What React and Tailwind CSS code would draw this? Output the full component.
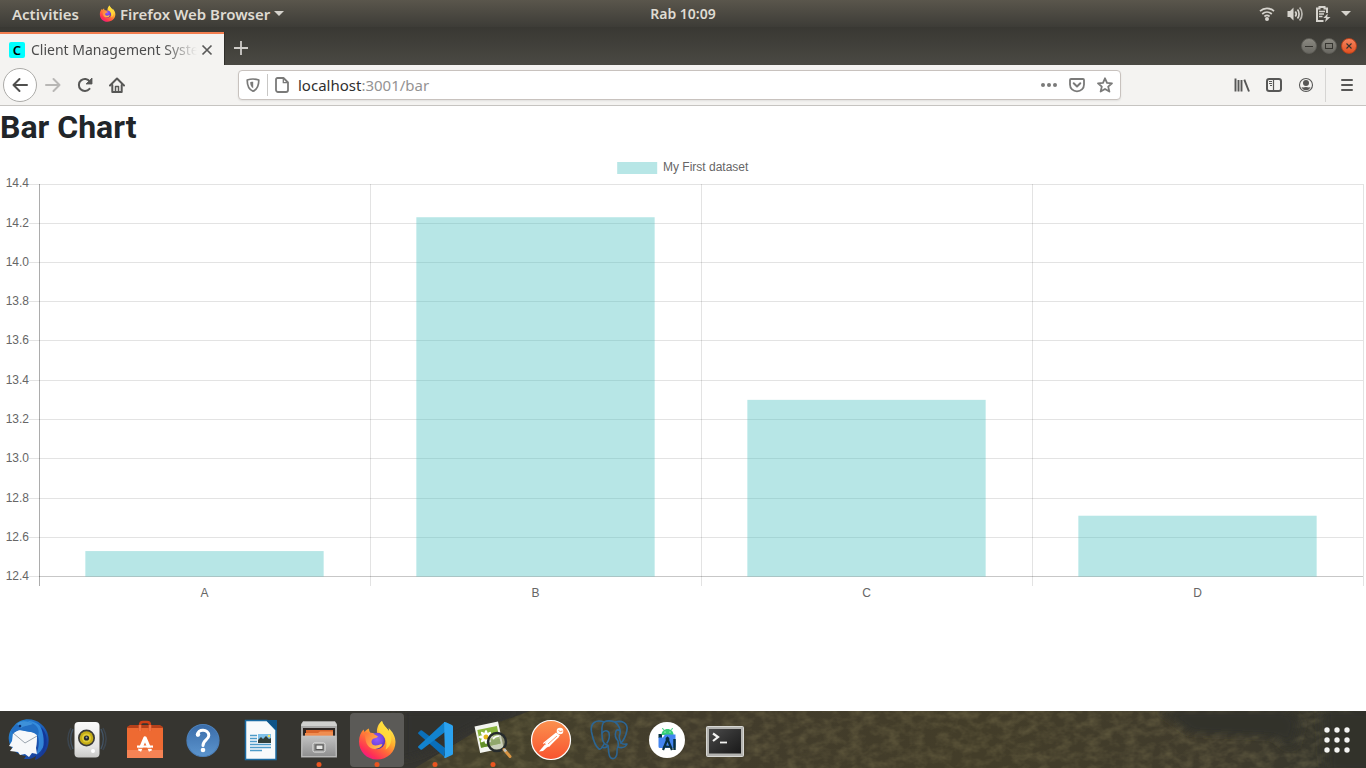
import React from "react";

const UI_FONT = "font-['Noto_Sans','Open_Sans',sans-serif]";

/* ---------- small icons ---------- */

function FirefoxMark({ className, id }) {
  return (
    <svg viewBox="0 0 38 40" className={className} aria-hidden="true">
      <defs>
        <linearGradient id={`${id}-body`} x1="0.85" y1="0.1" x2="0.25" y2="1">
          <stop offset="0" stopColor="#fff44f" />
          <stop offset="0.35" stopColor="#ffb02e" />
          <stop offset="0.6" stopColor="#ff6a3a" />
          <stop offset="0.85" stopColor="#ff2f56" />
          <stop offset="1" stopColor="#f0158f" />
        </linearGradient>
        <radialGradient id={`${id}-globe`} cx="0.5" cy="0.4" r="0.6">
          <stop offset="0" stopColor="#9059ff" />
          <stop offset="0.6" stopColor="#7547e0" />
          <stop offset="1" stopColor="#4a2aa5" />
        </radialGradient>
        <linearGradient id={`${id}-head`} x1="0" y1="0" x2="1" y2="0.6">
          <stop offset="0" stopColor="#ff7139" />
          <stop offset="1" stopColor="#ffbd4f" />
        </linearGradient>
      </defs>
      <path
        d="M24 1C25 5 29 8 31 11C31 10 31 9 30.500 8C35 12 37.500 17 37.500 22C37.500 32 29.500 39.500 19 39.500C8.500 39.500 1 31.500 1 21.500C1 16.500 3 12 5.500 9.500L6.500 12C8 10 9.500 9 11 8.500C11 10 11.500 12 12.500 13H19C18.500 8 20.500 3.500 24 1Z"
        fill={`url(#${id}-body)`}
      />
      <circle cx="19" cy="21" r="8.2" fill={`url(#${id}-globe)`} />
      <path
        d="M6 12C9 13 13 12 15 13.500L20 16.500C18 19 15.500 17.500 14 20C12.500 22.500 14.500 25.500 17.500 25.500C21 25.500 22 23.500 24.500 24.500C22 30 13 30.500 9.500 25C6.500 20.500 8 15.500 6 12Z"
        fill={`url(#${id}-head)`}
      />
      <path
        d="M24 1C25 6 31 9 33 16C34.500 22 31 28 27.500 29.500C30 24 28 16.500 22 13C19 10 21 4 24 1Z"
        fill="#ffdd3c"
        opacity="0.85"
      />
    </svg>
  );
}

function CaretDown() {
  return (
    <svg viewBox="0 0 10 5" className="h-[5px] w-[10px]" aria-hidden="true">
      <path d="M0 0H10L5 5Z" fill="#d6d3cd" />
    </svg>
  );
}

function WifiIcon() {
  return (
    <svg viewBox="0 0 16 16" className="size-4" fill="none" stroke="#d6d3cd" strokeWidth="1.700" aria-hidden="true">
      <path d="M1 5.200C5 1.300 11 1.300 15 5.200" />
      <path d="M3.200 8C6 5.500 10 5.500 12.800 8" />
      <path d="M5.400 10.500C7 9.200 9 9.200 10.600 10.500" />
      <circle cx="8" cy="13" r="2" fill="#d6d3cd" stroke="none" />
    </svg>
  );
}

function VolumeIcon() {
  return (
    <svg viewBox="0 0 16 16" className="size-4" fill="none" stroke="#d6d3cd" strokeWidth="1.700" aria-hidden="true">
      <path d="M0.500 5H3L6.500 1.500V14.500L3 11H0.500Z" fill="#d6d3cd" stroke="none" />
      <path d="M8.300 5.500C9.500 7 9.500 9 8.300 10.500" />
      <path d="M10.500 3.500C12.600 6 12.600 10 10.500 12.500" />
      <path d="M12.600 1.500C15.800 5 15.800 11 12.600 14.500" opacity="0.800" />
    </svg>
  );
}

function BatteryIcon() {
  return (
    <svg viewBox="0 0 16 16" className="size-4" fill="none" stroke="#d6d3cd" aria-hidden="true">
      <path d="M8.500 15H2V2.500H4.500V1H9.500V2.500H12V7" strokeWidth="2" />
      <path d="M4 5.500H10M4 8H9M4 10.500H7.500" strokeWidth="1.400" />
      <path d="M12.700 7.500L8.300 12H11L10 16L15.500 11H12.300Z" fill="#d6d3cd" stroke="none" />
    </svg>
  );
}

function BackIcon() {
  return (
    <svg viewBox="0 0 16 16" className="size-4" fill="none" stroke="#4f4f4e" strokeWidth="2" strokeLinecap="round" strokeLinejoin="round" aria-hidden="true">
      <path d="M15 8H1.500M7.500 2L1.500 8L7.500 14" />
    </svg>
  );
}

function ForwardIcon() {
  return (
    <svg viewBox="0 0 16 16" className="size-4" fill="none" stroke="#b8b7b5" strokeWidth="2" strokeLinecap="round" strokeLinejoin="round" aria-hidden="true">
      <path d="M1 8H14.500M8.500 2L14.500 8L8.500 14" />
    </svg>
  );
}

function ReloadIcon() {
  return (
    <svg viewBox="0 0 16 16" className="size-4" fill="none" stroke="#575756" strokeWidth="2" aria-hidden="true">
      <path d="M12.500 11.800A6 6 0 1 1 12.800 4.500" strokeLinecap="round" />
      <path d="M15 1V7H9Z" fill="#575756" stroke="#575756" strokeWidth="0.800" strokeLinejoin="round" />
    </svg>
  );
}

function HomeIcon() {
  return (
    <svg viewBox="0 0 16 16" className="size-4" fill="none" stroke="#575756" strokeWidth="2" strokeLinecap="round" strokeLinejoin="round" aria-hidden="true">
      <path d="M1 8.500L8 1.500L15 8.500" />
      <path d="M3.300 8V15H12.700V8" />
      <path d="M6.500 14.500V9.500H9.500V14.500" strokeWidth="1.500" />
    </svg>
  );
}

function ShieldIcon() {
  return (
    <svg viewBox="0 0 14 14" className="size-[14px]" fill="none" stroke="#7a7a79" aria-hidden="true">
      <path d="M7 1C9 1 11 1.400 12.800 2C12.800 8 11.500 11.500 7 13.200C2.500 11.500 1.200 8 1.200 2C3 1.400 5 1 7 1Z" strokeWidth="1.700" strokeLinejoin="round" />
      <path d="M7.200 3.800V10.200C5 9 4.300 7 4.200 4.200C5.200 3.900 6 3.800 7.200 3.800Z" fill="#7a7a79" stroke="none" />
    </svg>
  );
}

function PageIcon() {
  return (
    <svg viewBox="0 0 16 16" className="size-4" fill="none" stroke="#7a7a79" strokeWidth="1.800" strokeLinejoin="round" aria-hidden="true">
      <path d="M3.500 1H9.500L14 5.500V13A2 2 0 0 1 12 15H4A2 2 0 0 1 2 13V2.500A1.500 1.500 0 0 1 3.500 1Z" />
      <path d="M9.300 1.200V5.700H13.800" strokeWidth="1.300" />
    </svg>
  );
}

function DotsIcon() {
  return (
    <svg viewBox="0 0 16 16" className="size-4" fill="#7a7a79" aria-hidden="true">
      <circle cx="2" cy="8" r="2" />
      <circle cx="8" cy="8" r="2" />
      <circle cx="14" cy="8" r="2" />
    </svg>
  );
}

function PocketIcon() {
  return (
    <svg viewBox="0 0 16 16" className="size-4" fill="none" stroke="#7a7a79" strokeWidth="1.800" strokeLinecap="round" strokeLinejoin="round" aria-hidden="true">
      <path d="M2 2H14A1 1 0 0 1 15 3V7.500C15 11.500 12 14.300 8 14.300S1 11.500 1 7.500V3A1 1 0 0 1 2 2Z" />
      <path d="M4.700 6.300L8 9.500L11.300 6.300" strokeWidth="2" />
    </svg>
  );
}

function StarIcon() {
  return (
    <svg viewBox="0 0 16 16" className="size-4" fill="none" stroke="#7a7a79" strokeWidth="1.800" strokeLinejoin="round" aria-hidden="true">
      <path d="M8 1.300L10 5.900L15 6.300L11.200 9.600L12.400 14.600L8 11.900L3.600 14.600L4.800 9.600L1 6.300L6 5.900Z" />
    </svg>
  );
}

function LibraryIcon() {
  return (
    <svg viewBox="0 0 16 16" className="size-4" stroke="#575756" strokeWidth="1.900" aria-hidden="true">
      <path d="M1.500 1.500V14.500M4.500 3V14.500M7.500 3V14.500" />
      <path d="M10.300 2.600L15 14.500" />
    </svg>
  );
}

function SidebarIcon() {
  return (
    <svg viewBox="0 0 16 16" className="size-4" fill="none" stroke="#575756" aria-hidden="true">
      <rect x="1" y="2" width="14" height="12" rx="2.200" strokeWidth="2" />
      <path d="M7.500 2V14" strokeWidth="1.200" />
      <path d="M3 4.500H6M3 6.500H6M4 8.500H6" strokeWidth="1" />
    </svg>
  );
}

function AccountIcon() {
  return (
    <svg viewBox="0 0 16 16" className="size-4" fill="none" stroke="#575756" aria-hidden="true">
      <circle cx="8" cy="8" r="6.500" strokeWidth="1.100" />
      <circle cx="8" cy="6" r="3" fill="#575756" stroke="none" />
      <path d="M3.500 10C5 11 6.500 10 8 10S11 11 12.500 10C12 12 10 13.300 8 13.300S4 12 3.500 10Z" fill="#575756" stroke="none" />
    </svg>
  );
}

function HamburgerIcon() {
  return (
    <svg viewBox="0 0 16 16" className="size-4" stroke="#575756" strokeWidth="2" strokeLinecap="round" aria-hidden="true">
      <path d="M3 3H13M3 8H13M3 13H13" />
    </svg>
  );
}

/* ---------- dock icons ---------- */

function ThunderbirdIcon() {
  return (
    <svg viewBox="0 0 54 54" className="size-[54px]" aria-hidden="true">
      <defs>
        <linearGradient id="tb-blue" x1="0" y1="0" x2="1" y2="1">
          <stop offset="0" stopColor="#2b8fd8" />
          <stop offset="0.500" stopColor="#1c62bd" />
          <stop offset="1" stopColor="#152a86" />
        </linearGradient>
      </defs>
      <path d="M12 13C18 5 31 4 39 11C47 17 49 29 44 38C41 43 36 46 33 47L34 43C29 47 25 46 22 46L24 43C16 42 8 36 7 28C6 22 8 17 12 13Z" fill="url(#tb-blue)" />
      <path d="M27 8C38 9 45 19 43 29C41 37 36 41 34 42C37 35 38 27 35 20C33 15 28 12 21 12Z" fill="#3a94e4" opacity="0.800" />
      <path d="M38 13C46 20 47 32 40 40C43 31 42 20 38 13Z" fill="#12379a" />
      <path d="M11 20L17 17L35 20C35 26 35 31 34 35L35 41L30 40L27 44L23 41L18 42L16 39L8 38L11 34L7 33L10 28Z" fill="#f6f8fa" />
      <path d="M11 20L23 30L35 23" fill="none" stroke="#9ba5af" strokeWidth="1" />
      <path d="M9 18C13 10 22 7 30 10C36 13 38 18 36 23C31 18 27 19 23 18C19 16 14 17 11 21Z" fill="#236fc4" />
      <path d="M15 11C20 7 26 8 31 11C27 13 23 12 19 15Z" fill="#4a9fe2" opacity="0.700" />
      <circle cx="18" cy="13" r="1.300" fill="#10306b" />
    </svg>
  );
}

function SpeakerIcon() {
  return (
    <svg viewBox="0 0 54 54" className="size-[54px]" aria-hidden="true">
      <defs>
        <linearGradient id="sp-case" x1="0" y1="0" x2="0" y2="1">
          <stop offset="0" stopColor="#fafafa" />
          <stop offset="0.700" stopColor="#e4e4e3" />
          <stop offset="1" stopColor="#c9c9c7" />
        </linearGradient>
      </defs>
      <path d="M11 15C7 22 7 30 11 37M43 15C47 22 47 30 43 37" fill="none" stroke="#476386" strokeWidth="1.500" opacity="0.350" />
      <path d="M13 16C10 22 10 30 13 36M41 16C44 22 44 30 41 36" fill="none" stroke="#5278a5" strokeWidth="1.500" opacity="0.450" />
      <rect x="14.500" y="9" width="25" height="35.500" rx="4" fill="url(#sp-case)" />
      <circle cx="26.500" cy="25" r="8.500" fill="#3b3b38" />
      <circle cx="26.500" cy="25" r="6.800" fill="#c5ad16" />
      <circle cx="26.500" cy="25" r="4.500" fill="#e0cb35" />
      <circle cx="26.500" cy="25" r="2.600" fill="#24272b" />
      <circle cx="26.500" cy="24.500" r="1" fill="#8e9aab" />
      <circle cx="33" cy="38" r="2" fill="#fff" />
    </svg>
  );
}

function SoftwareIcon() {
  return (
    <svg viewBox="0 0 54 54" className="size-[54px]" aria-hidden="true">
      <path d="M9 14L12 12H42L45 14V17H9Z" fill="#b6401a" />
      <rect x="9" y="15" width="36" height="30" rx="0.500" fill="#ee6a32" />
      <rect x="9" y="37" width="36" height="8" fill="#f58355" />
      <path d="M22 18V12Q22 9 25 9H29Q32 9 32 12V18" fill="none" stroke="#cc3f17" strokeWidth="2.500" />
      <path d="M22 12V18M32 12V18" stroke="#f37444" strokeWidth="2.500" />
      <path d="M21.500 38L27 25L32.500 38" fill="none" stroke="#fff" strokeWidth="3.400" strokeLinejoin="round" />
      <rect x="19" y="32.500" width="16" height="2.200" fill="#fff" />
      <path d="M21 35.300H34" stroke="#ee6a32" strokeWidth="1" />
    </svg>
  );
}

function HelpIcon() {
  return (
    <svg viewBox="0 0 54 54" className="size-[54px]" fill="none" aria-hidden="true">
      <defs>
        <linearGradient id="hp-blue" x1="0" y1="0" x2="0" y2="1">
          <stop offset="0" stopColor="#3a6ca9" />
          <stop offset="1" stopColor="#5c95ce" />
        </linearGradient>
      </defs>
      <circle cx="27" cy="27.500" r="16" fill="url(#hp-blue)" stroke="#4c80ba" strokeWidth="1.200" />
      <path d="M21.500 22C21 15.500 33 15.500 32.800 22.500C32.700 27 27 27 27 32.500" stroke="#fff" strokeWidth="3" strokeLinecap="round" />
      <circle cx="22" cy="21.500" r="2.200" fill="#fff" />
      <circle cx="27" cy="37" r="2.300" fill="#fff" />
    </svg>
  );
}

function WriterIcon() {
  return (
    <svg viewBox="0 0 54 54" className="size-[54px]" aria-hidden="true">
      <path d="M11.500 7.500H33L42 17V46.500H11.500Z" fill="#f8fafb" stroke="#1a6ba3" strokeWidth="1.500" />
      <path d="M32 7H43V18Z" fill="#0f5488" />
      <path d="M16 22.500H23M16 25.500H23M16 28.500H23M16 31.500H37M16 34.500H37M16 37.500H28" stroke="#4e9cc9" strokeWidth="1.700" />
      <rect x="24" y="21" width="13" height="9" fill="#7ec0e8" />
      <path d="M24 30V27L27 24L29 26L32 23L35 26L37 25V30Z" fill="#33403a" />
      <circle cx="35" cy="23" r="1.200" fill="#f2e15f" />
    </svg>
  );
}

function FilesIcon() {
  return (
    <svg viewBox="0 0 54 54" className="size-[54px]" aria-hidden="true">
      <defs>
        <linearGradient id="fl-front" x1="0" y1="0" x2="0" y2="1">
          <stop offset="0" stopColor="#c2c2c2" />
          <stop offset="1" stopColor="#8f8f8f" />
        </linearGradient>
      </defs>
      <path d="M11 8.500H43L45 11V44.500H9V11Z" fill="#a9a9a8" />
      <path d="M11 8.500H43L45 13H9Z" fill="#d0d0ce" />
      <rect x="11" y="15" width="32" height="9" fill="#2d2522" />
      <rect x="14" y="17" width="27" height="7" fill="#d9642a" />
      <path d="M13 20H26L28 18.500H41V24H13Z" fill="#f08d50" />
      <path d="M10 23H44V43.500H10Z" fill="url(#fl-front)" stroke="#c4c4c3" strokeWidth="0.700" />
      <rect x="21" y="30" width="12" height="9" rx="1.500" fill="#8c8c8b" stroke="#e5e5e4" strokeWidth="1" />
      <rect x="24" y="32" width="7" height="4.500" fill="#e8e8e6" stroke="#555554" strokeWidth="1" />
    </svg>
  );
}

function FirefoxDockIcon() {
  return (
    <span className="flex size-[54px] items-center justify-center">
      <FirefoxMark id="ffd" className="h-10 w-[38px]" />
    </span>
  );
}

function CodeIcon() {
  return (
    <svg viewBox="0 0 54 54" className="size-[54px]" aria-hidden="true">
      <path d="M36.500 44L10.300 20.800Q9.800 20.200 10.300 19.600L12.500 17.500Q13.200 17 14 17.500L37 35Z" fill="#0a6fba" />
      <path d="M36.500 9L37 19L14 36.500Q13.200 37 12.500 36.500L10.300 34.400Q9.800 33.800 10.300 33.200Z" fill="#1283cf" />
      <path d="M36 9Q37 8.700 38 9.200L44 12Q45 12.500 45 13.500V40.500Q45 41.500 44 42L38 44.700Q37 45.200 36 44.500L37 42Z" fill="#2ba2f0" />
    </svg>
  );
}

function ImageViewerIcon() {
  return (
    <svg viewBox="0 0 54 54" className="size-[54px]" aria-hidden="true">
      <g transform="rotate(-12 22 24)">
        <rect x="11" y="11" width="24" height="27" fill="#f3f4ef" />
        <rect x="13" y="15" width="20" height="18" fill="#8ab53d" />
        <rect x="13" y="28" width="20" height="5" fill="#628f2a" />
      </g>
      <g fill="#fff">
        <ellipse cx="20" cy="24" rx="7.500" ry="2" />
        <ellipse cx="20" cy="24" rx="2" ry="7" />
        <ellipse cx="20" cy="24" rx="2" ry="7" transform="rotate(45 20 24)" />
        <ellipse cx="20" cy="24" rx="2" ry="7" transform="rotate(-45 20 24)" />
      </g>
      <circle cx="20" cy="24" r="2.500" fill="#e6b71f" />
      <circle cx="31" cy="29" r="9" fill="#b0b99a" fillOpacity="0.600" stroke="#262b2c" strokeWidth="2.500" />
      <path d="M27 26Q29 23 33 23" fill="none" stroke="#fff" strokeWidth="1.500" />
      <path d="M38 36.500L44 43.500" stroke="#d99443" strokeWidth="3" strokeLinecap="round" />
      <path d="M38 36L40 38.500" stroke="#bfc2be" strokeWidth="2.500" />
    </svg>
  );
}

function PostmanIcon() {
  return (
    <svg viewBox="0 0 54 54" className="size-[54px]" aria-hidden="true">
      <defs>
        <linearGradient id="pm-o" x1="0" y1="0" x2="0" y2="1">
          <stop offset="0" stopColor="#fb914f" />
          <stop offset="1" stopColor="#f8532f" />
        </linearGradient>
      </defs>
      <circle cx="27" cy="27" r="19.500" fill="url(#pm-o)" stroke="#fff" strokeWidth="1.200" />
      <circle cx="36" cy="18" r="3.300" fill="#fff" />
      <path d="M32 19.500L36 22.500L25 34L22.500 32.500L31 23L19.500 31L19 30Z" fill="#fff" />
      <path d="M31 21.500L21 30L23 34.500L35 24Z" fill="#fff" />
      <path d="M21 31.500L15 38.500L19 38L24.500 33Z" fill="#fff" />
      <path d="M24 31L33 23" stroke="#f9824a" strokeWidth="0.800" />
      <path d="M34.500 17.500Q36 19.500 38.500 18" fill="none" stroke="#f9824a" strokeWidth="0.900" />
    </svg>
  );
}

function PostgresIcon() {
  return (
    <svg viewBox="0 0 54 54" className="size-[54px]" fill="none" stroke="#2c6593" strokeWidth="1.600" strokeLinecap="round" strokeLinejoin="round" aria-hidden="true">
      <path d="M22 9C14 6 8 10 9.500 19C11 26 14 34 17 36C19 37 21 33 22 31" />
      <path d="M22 9C26 7 30 8 33 9C40 7 46 10 45 17C44 22 42 27 39 30C41 32 44 31 45 31C43 35 39 35 36 34" />
      <path d="M22 9C19 12 20 17 20 21C20 25 20 29 23 31C25 33 26 31 26 33C22 36 20 34 20 34" />
      <path d="M33 9C37 12 39 17 38 21C36 24 38 27 39 30" />
      <path d="M26 33C27 37 26 43 29 45C32 47 35 44 35 40C35 37 35 34 36 34C37 32 36 31 36 28C33 25 33 21 34 18C35 16 37 17 38 18" />
      <path d="M20 20C22 17 26 17 27 20C28 24 27 27 25 30" />
    </svg>
  );
}

function StudioIcon() {
  return (
    <svg viewBox="0 0 54 54" className="size-[54px]" fill="none" aria-hidden="true">
      <circle cx="27" cy="27" r="18" fill="#fff" />
      <path d="M18.500 21H22V25H18.500Z" fill="#073042" />
      <path d="M21.500 22C21.500 14 33.500 14 33.500 22Z" fill="#36cf79" />
      <path d="M23.500 17L22.500 15M31.500 17L32.500 15" stroke="#36cf79" strokeWidth="1" />
      <circle cx="25" cy="19" r="0.600" fill="#fff" />
      <circle cx="30" cy="19" r="0.600" fill="#fff" />
      <path d="M18.500 24.500H23L25 21.500H35.500V33.500Q35.500 35 34 35H20Q18.500 35 18.500 33.500Z" fill="#4385f0" />
      <path d="M23 37L27.500 26L32 37M24.500 33Q28 34.500 31 33" stroke="#073042" strokeWidth="2.200" />
      <circle cx="27.500" cy="26" r="2" fill="#073042" />
      <path d="M34.500 26V37" stroke="#073042" strokeWidth="2.500" />
    </svg>
  );
}

function TerminalIcon() {
  return (
    <svg viewBox="0 0 54 54" className="size-[54px]" fill="none" aria-hidden="true">
      <defs>
        <linearGradient id="tm-s" x1="0" y1="0" x2="1" y2="1">
          <stop offset="0" stopColor="#4b4b4b" />
          <stop offset="0.500" stopColor="#303030" />
          <stop offset="1" stopColor="#191919" />
        </linearGradient>
      </defs>
      <rect x="8.500" y="13.500" width="37" height="30" rx="1" fill="#b4b4b1" stroke="#d7d7d4" />
      <rect x="11" y="16" width="32" height="24.500" fill="url(#tm-s)" />
      <path d="M15 20.500L20 24L15 28" stroke="#f2f2f0" strokeWidth="2.200" />
      <path d="M22 29.500H29" stroke="#f2f2f0" strokeWidth="1.800" />
    </svg>
  );
}

const dockItems = [
  { name: "Thunderbird Mail", Icon: ThunderbirdIcon },
  { name: "Rhythmbox", Icon: SpeakerIcon },
  { name: "Ubuntu Software", Icon: SoftwareIcon },
  { name: "Help", Icon: HelpIcon },
  { name: "LibreOffice Writer", Icon: WriterIcon },
  { name: "Files", Icon: FilesIcon, running: true },
  { name: "Firefox Web Browser", Icon: FirefoxDockIcon, running: true, active: true },
  { name: "Visual Studio Code", Icon: CodeIcon, running: true },
  { name: "Image Viewer", Icon: ImageViewerIcon, running: true },
  { name: "Postman", Icon: PostmanIcon },
  { name: "pgAdmin", Icon: PostgresIcon },
  { name: "Android Studio", Icon: StudioIcon },
  { name: "Terminal", Icon: TerminalIcon },
];

/* ---------- desktop chrome ---------- */

function SystemBar() {
  return (
    <header className={`grid h-[27px] grid-cols-[1fr_auto_1fr] items-center bg-linear-to-b from-[#5a564c] to-[#3d3c37] px-3 text-[15px] leading-5 font-semibold text-[#dfdbd2] ${UI_FONT}`}>
      <div className="flex items-center gap-5">
        <button type="button">Activities</button>
        <button type="button" className="flex items-center gap-1">
          <FirefoxMark id="fft" className="size-[17px]" />
          <span>Firefox Web Browser</span>
          <CaretDown />
        </button>
      </div>
      <button type="button" className="text-[14px]">Rab 10:09</button>
      <div className="flex items-center justify-end gap-[10px] pr-[3px]">
        <div className="flex items-center gap-3">
          <WifiIcon />
          <VolumeIcon />
          <BatteryIcon />
        </div>
        <CaretDown />
      </div>
    </header>
  );
}

function WindowButton({ label, close, children }) {
  return (
    <button
      type="button"
      aria-label={label}
      className={`flex size-4 items-center justify-center rounded-full border ${
        close ? "border-[#b8431d] bg-linear-to-b from-[#f4845c] to-[#e2501e]" : "border-[#5f5e58] bg-linear-to-b from-[#8b8981] to-[#6a6963]"
      }`}
    >
      <svg viewBox="0 0 8 8" className="size-2" fill="none" stroke="#35342f" strokeWidth="1" aria-hidden="true">
        {children}
      </svg>
    </button>
  );
}

function TabStrip() {
  return (
    <div className={`flex h-[38px] items-stretch bg-linear-to-b from-[#393833] to-[#4a4943] pt-[5px] ${UI_FONT}`}>
      <div className="flex w-56 items-center border-t-2 border-[#f37e50] bg-[#f4f3f1] pl-[9px] text-[14px] text-[#4c4c4c]">
        <span className="flex size-4 shrink-0 items-center justify-center rounded-xs bg-[#00ffff] text-[13px] leading-4 font-semibold text-black">C</span>
        <span className="ml-1.5 w-[166px] overflow-hidden mask-r-from-80% mask-r-to-100% leading-5 whitespace-nowrap">Client Management System</span>
        <button type="button" aria-label="Close tab" className="ml-[3px] p-px">
          <svg viewBox="0 0 12 12" className="size-3" stroke="#5a5a59" strokeWidth="1.700" aria-hidden="true">
            <path d="M1.500 1.500L10.500 10.500M10.500 1.500L1.500 10.500" />
          </svg>
        </button>
      </div>
      <button type="button" aria-label="New tab" className="border-l border-[#2f2e2a] pb-0.5 pl-[9px]">
        <svg viewBox="0 0 14 14" className="size-[14px]" stroke="#cfcdc9" strokeWidth="1.800" aria-hidden="true">
          <path d="M7 0V14M0 7H14" />
        </svg>
      </button>
      <div className="ml-auto flex items-center gap-1 pr-[9px] pb-1.5">
        <WindowButton label="Minimize">
          <path d="M0 4.500H8" />
        </WindowButton>
        <WindowButton label="Maximize">
          <rect x="0.500" y="1.500" width="7" height="5" />
        </WindowButton>
        <WindowButton label="Close" close>
          <path d="M1.500 1.500L6.500 6.500M6.500 1.500L1.500 6.500" strokeWidth="1.100" />
        </WindowButton>
      </div>
    </div>
  );
}

function Toolbar() {
  return (
    <div className="flex h-[41px] items-center border-b border-[#c6c4c1] bg-[#f4f3f1]">
      <div className="flex flex-1 items-center">
        <button type="button" aria-label="Back" className="ml-[3px] flex size-[34px] items-center justify-center rounded-full border border-[#acaba8] bg-white">
          <BackIcon />
        </button>
        <div className="flex items-center gap-4 pl-2">
          <button type="button" aria-label="Forward" disabled><ForwardIcon /></button>
          <button type="button" aria-label="Reload"><ReloadIcon /></button>
          <button type="button" aria-label="Home"><HomeIcon /></button>
        </div>
      </div>
      <div className="mr-[7px] flex h-[30px] w-[65%] max-w-[883px] items-center rounded-[4px] border border-[#c8c2be] bg-white px-[7px] shadow-[0_1px_2px_rgba(0,0,0,0.08)]">
        <ShieldIcon />
        <span className="mr-1.5 ml-[7px] h-[22px] w-px bg-[#c8c7c5]" />
        <PageIcon />
        <div className={`relative ml-2 flex-1 text-[15px] leading-5 ${UI_FONT}`}>
          <input aria-label="Address" defaultValue="localhost:3001/bar" className="block w-full bg-transparent text-transparent caret-black outline-none" />
          <span aria-hidden="true" className="pointer-events-none absolute inset-0 text-[#949393]">
            <span className="text-[#2f2f2f]">localhost</span>:3001/bar
          </span>
        </div>
        <div className="flex items-center gap-3">
          <button type="button" aria-label="Page actions"><DotsIcon /></button>
          <button type="button" aria-label="Save to Pocket"><PocketIcon /></button>
          <button type="button" aria-label="Bookmark this page"><StarIcon /></button>
        </div>
      </div>
      <div className="flex flex-1 items-center justify-end">
        <div className="flex items-center gap-4 pr-[11px]">
          <button type="button" aria-label="Library"><LibraryIcon /></button>
          <button type="button" aria-label="Sidebars"><SidebarIcon /></button>
          <button type="button" aria-label="Account"><AccountIcon /></button>
        </div>
        <div className="flex h-[34px] items-center border-l border-[#d6d5d3] pr-[11px] pl-[13px]">
          <button type="button" aria-label="Open menu"><HamburgerIcon /></button>
        </div>
      </div>
    </div>
  );
}

/* ---------- chart ---------- */

const bars = [
  { label: "A", value: 12.53 },
  { label: "B", value: 14.23 },
  { label: "C", value: 13.3 },
  { label: "D", value: 12.71 },
];
const MIN = 12.4;
const MAX = 14.4;
const PLOT = { left: 39, right: 1363, top: 34, bottom: 426 };
const SCALE = { top: 33.85, bottom: 426.6 };
const ticks = Array.from({ length: 11 }, (_, i) => MAX - i * 0.2);
const columnWidth = (PLOT.right - PLOT.left) / bars.length;
const barWidth = columnWidth * 0.72;
const toY = (value) => SCALE.top + ((MAX - value) / (MAX - MIN)) * (SCALE.bottom - SCALE.top);

function BarChart() {
  return (
    <svg viewBox="0 0 1366 458" className="block w-full text-[12px] font-['Liberation_Sans',sans-serif]" role="img" aria-label="Bar chart of My First dataset">
      <g shapeRendering="crispEdges" fill="#000">
        {ticks.map((tick) => (
          <rect key={tick} x={PLOT.left - 10} y={Math.max(PLOT.top, Math.floor(toY(tick)))} width={PLOT.right - PLOT.left + 10} height="1" fillOpacity="0.110" />
        ))}
        {[0, 1, 2, 3, 4].map((i) => (
          <rect key={i} x={PLOT.left + i * columnWidth} y={PLOT.top} width="1" height={PLOT.bottom - PLOT.top + 10} fillOpacity="0.110" />
        ))}
        <rect x={PLOT.left} y={PLOT.top} width="1" height={PLOT.bottom - PLOT.top + 10} fillOpacity="0.240" />
        <rect x={PLOT.left} y={PLOT.bottom} width={PLOT.right - PLOT.left} height="1" fillOpacity="0.120" />
      </g>
      <g fill="#4bc0c0" fillOpacity="0.400">
        {bars.map((bar, i) => (
          <rect
            key={bar.label}
            x={PLOT.left + i * columnWidth + (columnWidth - barWidth) / 2}
            y={toY(bar.value)}
            width={barWidth}
            height={SCALE.bottom - toY(bar.value)}
          />
        ))}
        <rect x="617.200" y="12" width="40" height="12" />
      </g>
      <g fill="#666">
        <text x="663" y="21">My First dataset</text>
        {ticks.map((tick) => (
          <text key={tick} x="29" y={Math.floor(toY(tick)) + 4} textAnchor="end">{tick.toFixed(1)}</text>
        ))}
        {bars.map((bar, i) => (
          <text key={bar.label} x={PLOT.left + (i + 0.5) * columnWidth} y="447" textAnchor="middle">{bar.label}</text>
        ))}
      </g>
    </svg>
  );
}

function Dock() {
  return (
    <nav aria-label="Dock" className="relative flex items-end justify-between bg-[#363530] pt-0.5 pb-px">
      <svg className="absolute inset-0 size-full" preserveAspectRatio="none" viewBox="0 0 1366 57" aria-hidden="true">
        <defs>
          <linearGradient id="ground" gradientUnits="userSpaceOnUse" x1="400" x2="1366" y1="0" y2="0">
            <stop offset="0" stopColor="#45402f" />
            <stop offset="0.100" stopColor="#45412b" />
            <stop offset="0.300" stopColor="#423c2c" />
            <stop offset="0.600" stopColor="#433d29" />
            <stop offset="0.850" stopColor="#403b2c" />
            <stop offset="1" stopColor="#33342c" />
          </linearGradient>
          <filter id="grain" x="0" y="0" width="100%" height="100%">
            <feTurbulence type="fractalNoise" baseFrequency="0.080 0.120" numOctaves="3" seed="4" />
            <feColorMatrix values="0 0 0 0 0.420  0 0 0 0 0.360  0 0 0 0 0.160  1.200 0 0 0 -0.450" />
            <feComposite in2="SourceGraphic" operator="in" />
          </filter>
          <filter id="soft" x="-20%" y="-50%" width="140%" height="200%">
            <feGaussianBlur stdDeviation="6 3" />
          </filter>
        </defs>
        <path d="M415 57L480 18L530 0H1366V57Z" fill="url(#ground)" />
        <path d="M415 57L480 18L530 0H1366V57Z" filter="url(#grain)" opacity="0.400" />
        <path d="M1160 0H1290L1300 12L1292 40L1275 26L1190 22Z" fill="#30312b" filter="url(#soft)" />
        <path d="M400 0H515L480 12L425 42L400 50Z" fill="#32322d" filter="url(#soft)" />
        <path d="M1322 0H1380V60H1326Z" fill="#30312b" filter="url(#soft)" />
      </svg>
      <ul className="relative flex gap-1 pl-0.5">
        {dockItems.map(({ name, Icon, running, active }) => (
          <li key={name}>
            <button type="button" aria-label={name} className={`relative block rounded-[4px] ${active ? "bg-[#5b5a57]" : ""}`}>
              <Icon />
              {running && <span className="absolute bottom-0 left-1/2 size-[5px] -translate-x-1/2 rounded-full bg-[#e95420]" />}
            </button>
          </li>
        ))}
      </ul>
      <button type="button" aria-label="Show applications" className="relative mr-0.5">
        <svg viewBox="0 0 54 54" className="size-[54px]" fill="#f4f4f2" aria-hidden="true">
          {[17, 27, 37].map((y) => [17, 27, 37].map((x) => <circle key={`${x}-${y}`} cx={x} cy={y} r="2.700" />))}
        </svg>
      </button>
    </nav>
  );
}

export default function App() {
  return (
    <div className="flex min-h-screen flex-col bg-white">
      <SystemBar />
      <TabStrip />
      <Toolbar />
      <main className="flex-1">
        <h1 className="pt-0.5 pb-1 font-['Roboto',sans-serif] text-[32px] leading-[38px] font-bold text-[#212529]">Bar Chart</h1>
        <BarChart />
      </main>
      <Dock />
    </div>
  );
}
